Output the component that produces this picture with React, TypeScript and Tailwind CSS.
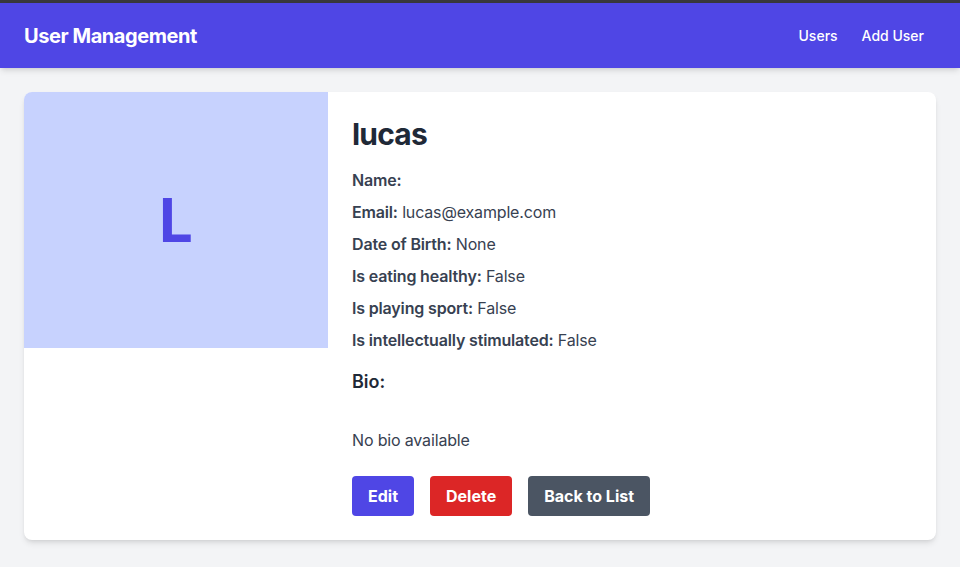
import React from "react";

export default function App() {
  const rows: [string, string][] = [
    ["Name:", ""],
    ["Email:", "lucas@example.com"],
    ["Date of Birth:", "None"],
    ["Is eating healthy:", "False"],
    ["Is playing sport:", "False"],
    ["Is intellectually stimulated:", "False"],
  ];
  return (
    <div className="min-h-[567px] bg-[#f3f4f6] font-['Inter',sans-serif]">
      <div className="h-[3px] bg-[#38383d]" />
      <header className="relative z-10 flex h-[65px] items-center justify-between bg-[#4f46e5] px-6 shadow-md">
        <h1 className="text-xl font-bold tracking-[-0.022em] text-white">User Management</h1>
        <nav className="flex items-center">
          <a className="px-3 py-2 text-sm font-medium text-white">Users</a>
          <a className="px-3 py-2 text-sm font-medium text-white">Add User</a>
        </nav>
      </header>
      <main className="p-6">
        <div className="flex overflow-hidden rounded-lg bg-white shadow-md">
          <div className="w-1/3 shrink-0">
            <div className="flex h-64 items-center justify-center bg-[#c7d2fe]">
              <span className="text-6xl font-bold text-[#4f46e5]">L</span>
            </div>
          </div>
          <div className="flex-1 p-6">
            <h2 className="mb-4 text-3xl font-bold tracking-[-0.027em] text-[#1f2937]">lucas</h2>
            <div className="space-y-2 text-base tracking-[-0.01em] text-[#374151]">
              {rows.map(([k, v]) => (
                <p key={k}>
                  <span className="font-semibold">{k}</span>
                  {v ? " " + v : ""}
                </p>
              ))}
            </div>
            <h3 className="mt-4 text-lg font-semibold text-[#1f2937]">Bio:</h3>
            <p className="mt-8 text-base tracking-[-0.01em] text-[#374151]">No bio available</p>
            <div className="mt-6 flex gap-4">
              <button className="rounded bg-[#4f46e5] px-4 py-2 text-base font-bold text-white">Edit</button>
              <button className="rounded bg-[#dc2626] px-4 py-2 text-base font-bold text-white">Delete</button>
              <button className="rounded bg-[#4b5563] px-4 py-2 text-base font-bold text-white">Back to List</button>
            </div>
          </div>
        </div>
      </main>
    </div>
  );
}
